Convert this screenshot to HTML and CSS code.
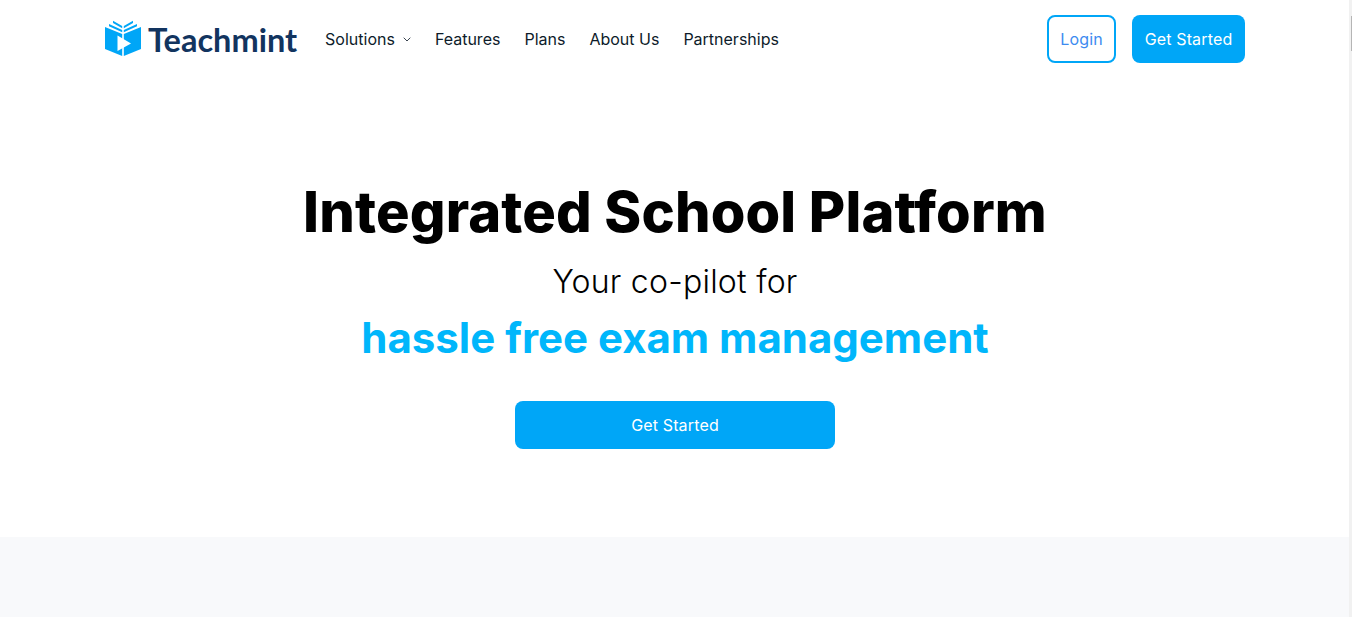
FILE: index.html
```html
<!DOCTYPE html>
<html lang="en">
<head>
  <meta charset="UTF-8">
  <title>Teachmint</title>
  <link rel="stylesheet" href="styles.css">
</head>
<body>
  <div class="page">
    <header class="navbar">
      <a class="logo" href="#">
        <svg class="logo-icon" viewBox="0 0 36 36" width="36" height="36">
          <path fill="#00a6f7" d="M0 7 17.2 14V36L0 29z"/>
          <path fill="#00a6f7" d="M36 7 18.8 14V36L36 29z"/>
          <path fill="#00a6f7" d="M4 4 17.2 10v2.2L4 6.2zM8 .8 17.2 6v2.2L8 3z"/>
          <path fill="#00a6f7" d="M32 4 18.8 10v2.2L32 6.2zM28 .8 18.8 6v2.2L28 3z"/>
          <path fill="#fff" d="M12.5 15.5 26 23.5 12.5 31z"/>
        </svg>
        <span class="logo-text">Teachmint</span>
      </a>
      <nav class="nav-links">
        <a href="#" class="nav-link">Solutions
          <svg class="chevron" viewBox="0 0 8 5" width="8" height="5"><path d="M.7.7 4 4 7.3.7" fill="none" stroke="#3a4450" stroke-width="1"/></svg>
        </a>
        <a href="#" class="nav-link">Features</a>
        <a href="#" class="nav-link">Plans</a>
        <a href="#" class="nav-link">About Us</a>
        <a href="#" class="nav-link">Partnerships</a>
      </nav>
      <div class="nav-actions">
        <a href="#" class="btn btn-outline">Login</a>
        <a href="#" class="btn btn-solid">Get Started</a>
      </div>
    </header>

    <section class="hero">
      <h1>Integrated School Platform</h1>
      <p class="subtitle">Your co-pilot for</p>
      <p class="highlight">hassle free exam management</p>
      <a href="#" class="btn btn-solid btn-wide">Get Started</a>
    </section>

    <section class="next-section"></section>
  </div>
  <div class="scrollbar"><div class="scrollbar-thumb"></div></div>
</body>
</html>
```

FILE: styles.css
```css
html, body {
  height: 100%;
}

body {
  margin: 0;
  display: flex;
  overflow: hidden;
  font-family: 'Inter', sans-serif;
  background-color: #fff;
  color: #000;
}

a {
  text-decoration: none;
}

.page {
  flex: 1;
  min-width: 0;
}

.scrollbar {
  width: 3px;
  background-color: #f1f1f1;
  display: flex;
  justify-content: flex-end;
  align-items: flex-start;
}

.scrollbar-thumb {
  width: 1px;
  height: 35px;
  margin-top: 16px;
  background-color: #b5b5b5;
}

.navbar {
  height: 78px;
  box-sizing: border-box;
  padding: 15px 104px 0 105px;
  display: flex;
  align-items: flex-start;
}

.logo {
  display: flex;
  align-items: center;
  gap: 7px;
  height: 48px;
  margin-right: 28px;
}

.logo-icon {
  display: block;
  margin-top: -2px;
}

.logo-text {
  font-family: 'Lato', sans-serif;
  font-size: 32.5px;
  font-weight: 700;
  color: #12345f;
}

.nav-links {
  display: flex;
  align-items: center;
  gap: 24px;
  height: 48px;
}

.nav-link {
  font-size: 16px;
  color: #0d1b2a;
  display: flex;
  align-items: center;
  gap: 8px;
}

.chevron {
  display: block;
  margin-top: 1px;
}

.nav-actions {
  margin-left: auto;
  display: flex;
  gap: 16px;
}

.btn {
  box-sizing: border-box;
  height: 48px;
  display: flex;
  align-items: center;
  justify-content: center;
  font-size: 16px;
  letter-spacing: 0.15px;
  border-radius: 8px;
}

.btn-outline {
  width: 69px;
  border: 2px solid #00a6f7;
  color: #3d8bf0;
}

.btn-solid {
  width: 113px;
  background-color: #00a6f7;
  color: #fff;
}

.hero {
  height: 459px;
  display: flex;
  flex-direction: column;
  align-items: center;
  padding-left: 1px;
}

.hero h1 {
  margin: 100px 0 0;
  font-size: 56px;
  line-height: 68px;
  font-weight: 800;
  letter-spacing: 0.15px;
}

.subtitle {
  margin: 16px 0 0;
  font-size: 32px;
  line-height: 40px;
  font-weight: 300;
  letter-spacing: 0.25px;
}

.highlight {
  margin: 12px 0 0;
  font-size: 42px;
  line-height: 48px;
  font-weight: 700;
  color: #00b6fb;
}

.btn-wide {
  width: 320px;
  margin-top: 39px;
}

.next-section {
  height: 80px;
  background-color: #f8f9fb;
}
```
